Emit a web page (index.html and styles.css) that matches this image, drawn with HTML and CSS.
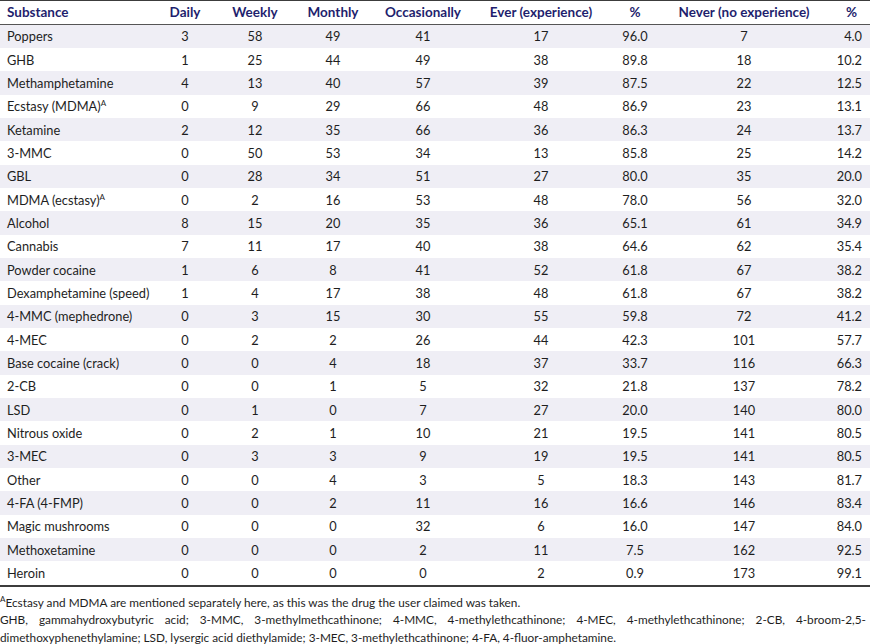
FILE: index.html
```html
<!DOCTYPE html>
<html>
<head>
<meta charset="utf-8">
<link rel="stylesheet" href="styles.css">
</head>
<body>
<div class="data">
<div class="row head"><div class="sub">Substance</div><div>Daily</div><div>Weekly</div><div>Monthly</div><div>Occasionally</div><div>Ever (experience)</div><div>%</div><div>Never (no experience)</div><div class="last">%</div></div>
<div class="row"><div class="sub">Poppers</div><div>3</div><div>58</div><div>49</div><div>41</div><div>17</div><div>96.0</div><div>7</div><div class="last">4.0</div></div>
<div class="row"><div class="sub">GHB</div><div>1</div><div>25</div><div>44</div><div>49</div><div>38</div><div>89.8</div><div>18</div><div class="last">10.2</div></div>
<div class="row"><div class="sub">Methamphetamine</div><div>4</div><div>13</div><div>40</div><div>57</div><div>39</div><div>87.5</div><div>22</div><div class="last">12.5</div></div>
<div class="row"><div class="sub">Ecstasy (MDMA)<sup>A</sup></div><div>0</div><div>9</div><div>29</div><div>66</div><div>48</div><div>86.9</div><div>23</div><div class="last">13.1</div></div>
<div class="row"><div class="sub">Ketamine</div><div>2</div><div>12</div><div>35</div><div>66</div><div>36</div><div>86.3</div><div>24</div><div class="last">13.7</div></div>
<div class="row"><div class="sub">3-MMC</div><div>0</div><div>50</div><div>53</div><div>34</div><div>13</div><div>85.8</div><div>25</div><div class="last">14.2</div></div>
<div class="row"><div class="sub">GBL</div><div>0</div><div>28</div><div>34</div><div>51</div><div>27</div><div>80.0</div><div>35</div><div class="last">20.0</div></div>
<div class="row"><div class="sub">MDMA (ecstasy)<sup>A</sup></div><div>0</div><div>2</div><div>16</div><div>53</div><div>48</div><div>78.0</div><div>56</div><div class="last">32.0</div></div>
<div class="row"><div class="sub">Alcohol</div><div>8</div><div>15</div><div>20</div><div>35</div><div>36</div><div>65.1</div><div>61</div><div class="last">34.9</div></div>
<div class="row"><div class="sub">Cannabis</div><div>7</div><div>11</div><div>17</div><div>40</div><div>38</div><div>64.6</div><div>62</div><div class="last">35.4</div></div>
<div class="row"><div class="sub">Powder cocaine</div><div>1</div><div>6</div><div>8</div><div>41</div><div>52</div><div>61.8</div><div>67</div><div class="last">38.2</div></div>
<div class="row"><div class="sub">Dexamphetamine (speed)</div><div>1</div><div>4</div><div>17</div><div>38</div><div>48</div><div>61.8</div><div>67</div><div class="last">38.2</div></div>
<div class="row"><div class="sub">4-MMC (mephedrone)</div><div>0</div><div>3</div><div>15</div><div>30</div><div>55</div><div>59.8</div><div>72</div><div class="last">41.2</div></div>
<div class="row"><div class="sub">4-MEC</div><div>0</div><div>2</div><div>2</div><div>26</div><div>44</div><div>42.3</div><div>101</div><div class="last">57.7</div></div>
<div class="row"><div class="sub">Base cocaine (crack)</div><div>0</div><div>0</div><div>4</div><div>18</div><div>37</div><div>33.7</div><div>116</div><div class="last">66.3</div></div>
<div class="row"><div class="sub">2-CB</div><div>0</div><div>0</div><div>1</div><div>5</div><div>32</div><div>21.8</div><div>137</div><div class="last">78.2</div></div>
<div class="row"><div class="sub">LSD</div><div>0</div><div>1</div><div>0</div><div>7</div><div>27</div><div>20.0</div><div>140</div><div class="last">80.0</div></div>
<div class="row"><div class="sub">Nitrous oxide</div><div>0</div><div>2</div><div>1</div><div>10</div><div>21</div><div>19.5</div><div>141</div><div class="last">80.5</div></div>
<div class="row"><div class="sub">3-MEC</div><div>0</div><div>3</div><div>3</div><div>9</div><div>19</div><div>19.5</div><div>141</div><div class="last">80.5</div></div>
<div class="row"><div class="sub">Other</div><div>0</div><div>0</div><div>4</div><div>3</div><div>5</div><div>18.3</div><div>143</div><div class="last">81.7</div></div>
<div class="row"><div class="sub">4-FA (4-FMP)</div><div>0</div><div>0</div><div>2</div><div>11</div><div>16</div><div>16.6</div><div>146</div><div class="last">83.4</div></div>
<div class="row"><div class="sub">Magic mushrooms</div><div>0</div><div>0</div><div>0</div><div>32</div><div>6</div><div>16.0</div><div>147</div><div class="last">84.0</div></div>
<div class="row"><div class="sub">Methoxetamine</div><div>0</div><div>0</div><div>0</div><div>2</div><div>11</div><div>7.5</div><div>162</div><div class="last">92.5</div></div>
<div class="row"><div class="sub">Heroin</div><div>0</div><div>0</div><div>0</div><div>0</div><div>2</div><div>0.9</div><div>173</div><div class="last">99.1</div></div>
</div>
<div class="notes">
<p class="note1"><sup>A</sup>Ecstasy and MDMA are mentioned separately here, as this was the drug the user claimed was taken.</p>
<p class="note2">GHB, gammahydroxybutyric acid; 3-MMC, 3-methylmethcathinone; 4-MMC, 4-methylethcathinone; 4-MEC, 4-methylethcathinone; 2-CB, 4-broom-2,5-dimethoxyphenethylamine; LSD, lysergic acid diethylamide; 3-MEC, 3-methylethcathinone; 4-FA, 4-fluor-amphetamine.</p>
</div>
</body>
</html>
```
FILE: styles.css
```css
html, body {
  margin: 0;
  padding: 0;
  background: #ffffff;
}
body {
  width: 870px;
  font-family: Lato, "Open Sans", sans-serif;
  color: #1e1e1e;
}
.data {
  width: 870px;
  font-size: 12.8px;
  border-top: 1.5px solid #3c3c3c;
  border-bottom: 2px solid #3c3c3c;
}
.row {
  display: grid;
  grid-template-columns: 150px 70px 70px 86px 94px 142px 46px 172px 40px;
  height: 23.35px;
  align-items: center;
  white-space: nowrap;
}
.row > div {
  text-align: center;
}
.row:nth-child(even) {
  background: #efeef5;
}
.row.head {
  height: 22.5px;
  font-size: 13.5px;
  font-weight: 700;
  color: #1f1f6e;
  border-bottom: 1px solid #555555;
}
.row > .sub {
  text-align: left;
  padding-left: 7px;
}
.row > .last {
  text-align: right;
  padding-right: 8px;
}
.row.head > .last {
  padding-right: 13px;
}
.data sup {
  font-size: 8px;
  line-height: 0;
  vertical-align: 5px;
}
.notes {
  font-size: 11.8px;
  line-height: 17.5px;
  padding-top: 7px;
}
.notes p {
  margin: 0;
}
.note2 {
  text-align: justify;
  padding-right: 4px;
}
.notes sup {
  font-size: 8px;
  line-height: 0;
  vertical-align: 5px;
}
```
